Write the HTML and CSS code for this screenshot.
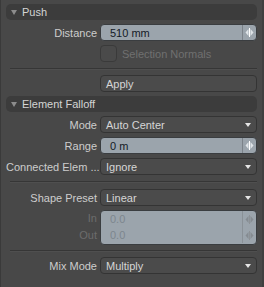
FILE: index.html
```html
<!DOCTYPE html>
<html>
<head>
<meta charset="utf-8">
<link rel="stylesheet" href="styles.css">
</head>
<body>
<div class="panel">
  <div class="header"><span class="tri"></span>Push</div>
  <div class="row r-distance"><span class="label">Distance</span><div class="field num">510 mm<span class="spin"><svg width="9" height="9" viewBox="0 0 9 9"><path d="M3.5 1 L3.5 8 L0.5 4.5 Z M5.5 1 L5.5 8 L8.5 4.5 Z" fill="#dfe4e8"/><rect x="4" y="0" width="1" height="9" fill="#ffffff"/></svg></span></div></div>
  <div class="row r-check"><span class="label"></span><div class="check"><span class="box"></span><span class="dim">Selection Normals</span></div></div>
  <div class="sep s1"></div>
  <div class="row r-apply"><span class="label"></span><div class="btn">Apply</div></div>
  <div class="header h2"><span class="tri"></span>Element Falloff</div>
  <div class="row r-mode"><span class="label">Mode</span><div class="drop">Auto Center<span class="arrow"></span></div></div>
  <div class="row r-range"><span class="label">Range</span><div class="field num">0 m<span class="spin"><svg width="9" height="9" viewBox="0 0 9 9"><path d="M3.5 1 L3.5 8 L0.5 4.5 Z M5.5 1 L5.5 8 L8.5 4.5 Z" fill="#dfe4e8"/><rect x="4" y="0" width="1" height="9" fill="#ffffff"/></svg></span></div></div>
  <div class="row r-conn"><span class="label">Connected Elem ...</span><div class="drop">Ignore<span class="arrow"></span></div></div>
  <div class="sep s2"></div>
  <div class="row r-shape"><span class="label">Shape Preset</span><div class="drop">Linear<span class="arrow"></span></div></div>
  <div class="inout">
    <div class="io-labels"><span class="label dim">In</span><span class="label dim">Out</span></div>
    <div class="field num dis">
      <div class="io-line">0.0<span class="spin"><svg width="9" height="9" viewBox="0 0 9 9"><path d="M3.5 1 L3.5 8 L0.5 4.5 Z M5.5 1 L5.5 8 L8.5 4.5 Z" fill="#858b91"/><rect x="4" y="0" width="1" height="9" fill="#8c9196"/></svg></span></div>
      <div class="io-line">0.0<span class="spin"><svg width="9" height="9" viewBox="0 0 9 9"><path d="M3.5 1 L3.5 8 L0.5 4.5 Z M5.5 1 L5.5 8 L8.5 4.5 Z" fill="#858b91"/><rect x="4" y="0" width="1" height="9" fill="#8c9196"/></svg></span></div>
    </div>
  </div>
  <div class="sep s3"></div>
  <div class="row r-mix"><span class="label">Mix Mode</span><div class="drop">Multiply<span class="arrow"></span></div></div>
</div>
</body>
</html>
```
FILE: styles.css
```css
html, body {
  margin: 0;
  padding: 0;
  background: #484848;
}
body {
  width: 264px;
  height: 287px;
  overflow: hidden;
  font-family: "Liberation Sans", Arial, sans-serif;
  font-size: 11px;
  color: #cfcfcf;
}
.panel {
  box-sizing: border-box;
  height: 287px;
  padding: 4px 5px 0 5px;
  border-left: 1px solid #3a3a3a;
  border-right: 2px solid #3f3f3f;
  background: #484848;
}
.header {
  height: 16px;
  background: #3c3c3c;
  border-radius: 5px;
  display: flex;
  align-items: center;
  padding-left: 5px;
  color: #d4d4d4;
}
.header.h2 { margin-top: 4px; }
.tri {
  width: 0;
  height: 0;
  border-left: 3px solid transparent;
  border-right: 3px solid transparent;
  border-top: 5px solid #8c8c8c;
  margin-right: 5px;
  margin-top: 1px;
}
.row {
  display: grid;
  grid-template-columns: 91px 1fr;
  column-gap: 3px;
  align-items: center;
  height: 17px;
  margin-top: 4px;
}
.label {
  text-align: right;
  white-space: nowrap;
  color: #cdcdcd;
}
.field, .drop, .btn {
  box-sizing: border-box;
  height: 17px;
  border-radius: 4px;
  position: relative;
  display: flex;
  align-items: center;
}
.field {
  background: #9ba4ac;
  border: 1px solid #3a3d40;
  color: #141a26;
  padding-left: 9px;
}
.spin {
  position: absolute;
  right: 0;
  top: 0;
  bottom: 0;
  width: 13px;
  border-left: 1px solid #7b8289;
  display: flex;
  align-items: center;
  justify-content: center;
}
.drop, .btn {
  background: #4b4b4b;
  border: 1px solid #343434;
  color: #d6d6d6;
  padding-left: 5px;
}
.arrow {
  position: absolute;
  right: 5px;
  top: 6px;
  width: 0;
  height: 0;
  border-left: 3px solid transparent;
  border-right: 3px solid transparent;
  border-top: 4px solid #e6e6e6;
}
.check {
  display: flex;
  align-items: center;
  height: 17px;
}
.box {
  box-sizing: border-box;
  width: 17px;
  height: 17px;
  border-radius: 4px;
  background: #4a4a4a;
  border: 1px solid #3a3a3a;
  margin-right: 5px;
}
.dim { color: #707070; }
.sep {
  height: 1px;
  background: #363636;
  border-bottom: 1px solid #4f4f4f;
  margin-left: 4px;
}
.s1 { margin-top: 6px; }
.s2 { margin-top: 6px; }
.s3 { margin-top: 5px; }
.r-apply { margin-top: 5px; }
.r-shape { margin-top: 6px; }
.r-mix { margin-top: 5px; }
.inout {
  display: grid;
  grid-template-columns: 91px 1fr;
  column-gap: 3px;
  margin-top: 4px;
}
.io-labels {
  display: flex;
  flex-direction: column;
}
.io-labels .label {
  height: 17px;
  line-height: 17px;
  color: #6c6c6c;
}
.field.dis {
  height: 35px;
  flex-direction: column;
  align-items: stretch;
  padding-left: 0;
  color: #7d868e;
}
.io-line {
  position: relative;
  height: 16px;
  display: flex;
  align-items: center;
  padding-left: 9px;
}
.field.dis .spin { border-left-color: #8a9197; }
```
